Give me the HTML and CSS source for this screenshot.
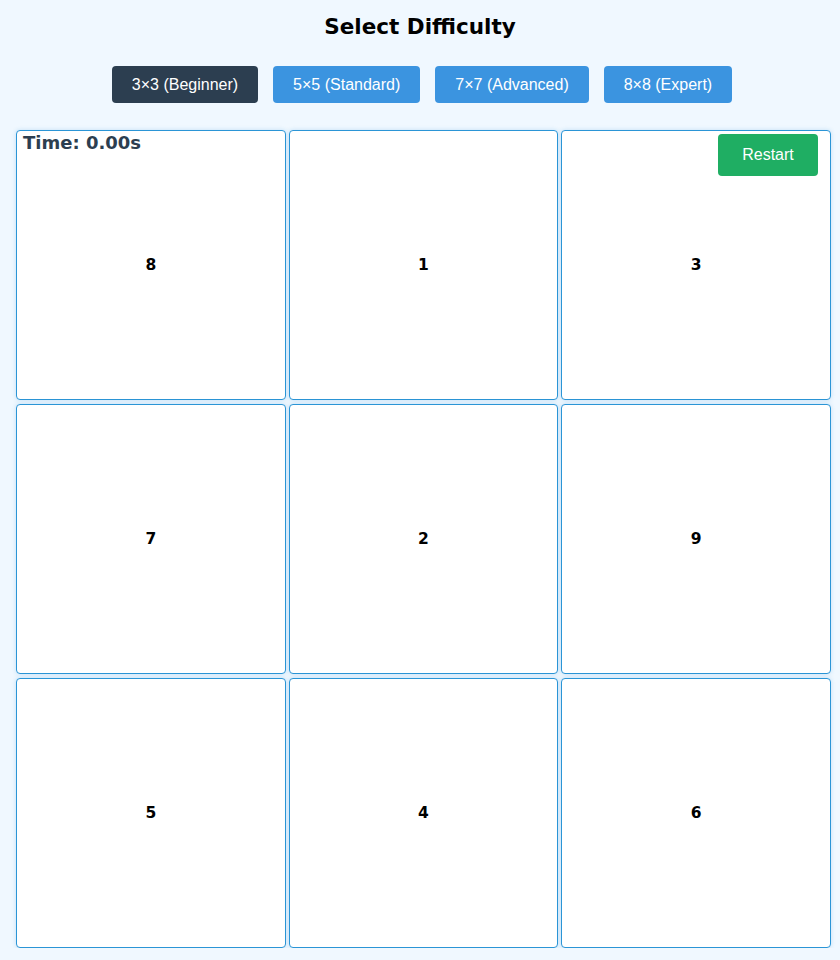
FILE: index.html
```
<!DOCTYPE html>
<html>
<head>
<meta charset="utf-8">
<link rel="stylesheet" href="styles.css">
</head>
<body>
<h1 class="title">Select Difficulty</h1>
<div class="levels">
  <button class="level active">3×3 (Beginner)</button>
  <button class="level">5×5 (Standard)</button>
  <button class="level">7×7 (Advanced)</button>
  <button class="level">8×8 (Expert)</button>
</div>
<div class="board">
  <div class="timer">Time: 0.00s</div>
  <button class="restart">Restart</button>
  <div class="cell">8</div>
  <div class="cell">1</div>
  <div class="cell">3</div>
  <div class="cell">7</div>
  <div class="cell">2</div>
  <div class="cell">9</div>
  <div class="cell">5</div>
  <div class="cell">4</div>
  <div class="cell">6</div>
</div>
</body>
</html>
```
FILE: styles.css
```
html, body {
  margin: 0;
  padding: 0;
  background: #f0f8ff;
}
body {
  font-family: "DejaVu Sans", Verdana, sans-serif;
}
.title {
  margin: 0;
  padding-top: 13px;
  height: 53px;
  box-sizing: border-box;
  text-align: center;
  font-size: 21.5px;
  font-weight: bold;
  color: #000;
  line-height: 28px;
}
.levels {
  display: flex;
  justify-content: center;
  gap: 15px;
  margin-top: 13px;
  padding-left: 4px;
}
.level {
  font-family: "Liberation Sans", Arial, sans-serif;
  font-size: 16px;
  color: #fff;
  background: #3b94e0;
  border: none;
  border-radius: 4px;
  height: 37px;
  padding: 0 20px;
}
.level.active {
  background: #2c3e50;
}
.board {
  position: relative;
  display: grid;
  grid-template-columns: repeat(3, 1fr);
  grid-auto-rows: 270px;
  column-gap: 3px;
  row-gap: 4px;
  width: 815px;
  margin: 27px 0 0 16px;
}
.cell {
  background: #fff;
  border: 1px solid #2b95d6;
  border-radius: 4px;
  box-shadow: 0 0 4px rgba(52, 152, 219, 0.25);
  display: flex;
  align-items: center;
  justify-content: center;
  font-weight: bold;
  font-size: 15.5px;
  color: #000;
}
.timer {
  position: absolute;
  left: 7px;
  top: 2px;
  font-size: 18px;
  font-weight: bold;
  color: #2c3e50;
  z-index: 2;
}
.restart {
  position: absolute;
  top: 4px;
  right: 13px;
  width: 100px;
  height: 42px;
  background: #1fae63;
  color: #fff;
  border: none;
  border-radius: 4px;
  font-family: "Liberation Sans", Arial, sans-serif;
  font-size: 16px;
  z-index: 2;
}
```
